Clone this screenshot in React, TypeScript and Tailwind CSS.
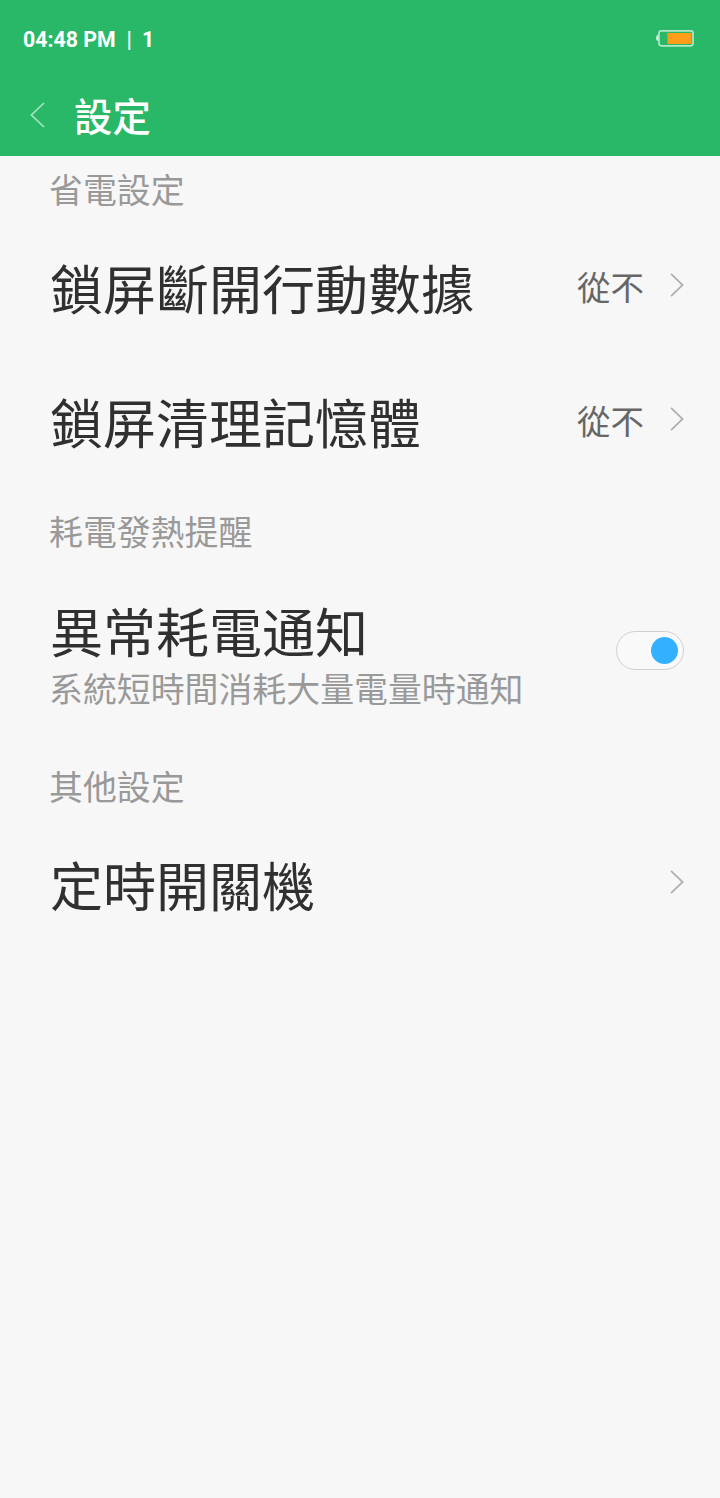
import { useState } from 'react'
import type { ReactNode } from 'react'

function Chevron() {
  return (
    <svg className="block h-6 w-4 shrink-0" viewBox="0 0 16 24" fill="none" stroke="#b0b0b0" strokeWidth="1.8">
      <path d="M2 0.9 L13.6 12 L2 23.1" />
    </svg>
  )
}

function BatteryIcon() {
  return (
    <svg className="block h-[18px] w-[39px]" viewBox="0 0 39 18" fill="none">
      <path d="M3.2 5.6 Q1 6.4 1 9 Q1 11.6 3.2 12.4 Z" fill="#ffffff" fillOpacity="0.8" />
      <rect x="4" y="1.8" width="34" height="15" rx="2.2" stroke="#ffffff" strokeOpacity="0.65" strokeWidth="1.7" />
      <rect x="12.5" y="4" width="24" height="11" fill="#ff9c1a" />
    </svg>
  )
}

function SectionLabel({ children }: { children: ReactNode }) {
  return <h2 className="text-[33.9px] leading-[50px] text-[#999999]">{children}</h2>
}

function SettingRow({ title, value }: { title: string; value?: string }) {
  return (
    <div className="flex h-[134px] items-center justify-between pr-[35px] pl-[50px]">
      <span className="pt-[3px] text-[53px] leading-[76px] text-[#303030]">{title}</span>
      <div className="flex items-center gap-[25px]">
        {value && <span className="pt-px text-[33.5px] leading-[50px] text-[#666666]">{value}</span>}
        <Chevron />
      </div>
    </div>
  )
}

export default function App() {
  const [notify, setNotify] = useState(true)

  return (
    <div className="h-[1498px] w-[720px] overflow-hidden bg-[#f7f7f7] font-['Noto_Sans_CJK_SC',sans-serif] font-normal">
      {/* Status bar and title */}
      <header className="h-[156px] bg-[#28b868] text-white">
        <div className="flex h-[76px] items-center justify-between pr-[26px] pl-[23px]">
          <div className="flex items-center pt-[3px] font-['Roboto',sans-serif] text-[21.3px] leading-[26px] font-bold">
            <span>04:48 PM</span>
            <span className="ml-[11px]">|</span>
            <span className="ml-[10px]">1</span>
          </div>
          <BatteryIcon />
        </div>
        <div className="flex h-[78px] items-center pl-[29px]">
          <svg className="block h-[26px] w-[17px]" viewBox="0 0 17 26" fill="none" stroke="#ffffff" strokeOpacity="0.6" strokeWidth="1.7">
            <path d="M15 1 L2.4 13 L15 25" />
          </svg>
          <h1 className="ml-[28px] pb-[2px] text-[38.4px] leading-[54px] font-medium">設定</h1>
        </div>
      </header>

      <main>
        {/* Power saving */}
        <section>
          <div className="flex h-[62px] items-center pt-[3px] pl-[49px]">
            <SectionLabel>省電設定</SectionLabel>
          </div>
          <SettingRow title="鎖屏斷開行動數據" value="從不" />
          <SettingRow title="鎖屏清理記憶體" value="從不" />
        </section>

        {/* Alerts */}
        <section>
          <div className="flex h-[87px] items-center pt-[3px] pl-[49px]">
            <SectionLabel>耗電發熱提醒</SectionLabel>
          </div>
          <div className="flex h-[155px] items-center justify-between pr-[36px] pl-[50px]">
            <div className="pt-[9px]">
              <div className="text-[53px] leading-[64px] text-[#303030]">異常耗電通知</div>
              <div className="-ml-px text-[33.9px] leading-[51px] text-[#999999]">系統短時間消耗大量電量時通知</div>
            </div>
            <button
              role="switch"
              aria-checked={notify}
              aria-label="異常耗電通知"
              onClick={() => setNotify(!notify)}
              className={`flex h-[39px] w-[68px] items-center rounded-full border border-[#d0d0d0] bg-[#f9f9f9] px-[5px] ${notify ? 'justify-end' : 'justify-start'}`}
            >
              <span className={`h-[27px] w-[27px] rounded-full ${notify ? 'bg-[#33b1ff]' : 'bg-[#cccccc]'}`} />
            </button>
          </div>
        </section>

        {/* Other */}
        <section>
          <div className="flex h-[87px] items-end pb-[4px] pl-[49px]">
            <SectionLabel>其他設定</SectionLabel>
          </div>
          <SettingRow title="定時開關機" />
        </section>
      </main>
    </div>
  )
}
